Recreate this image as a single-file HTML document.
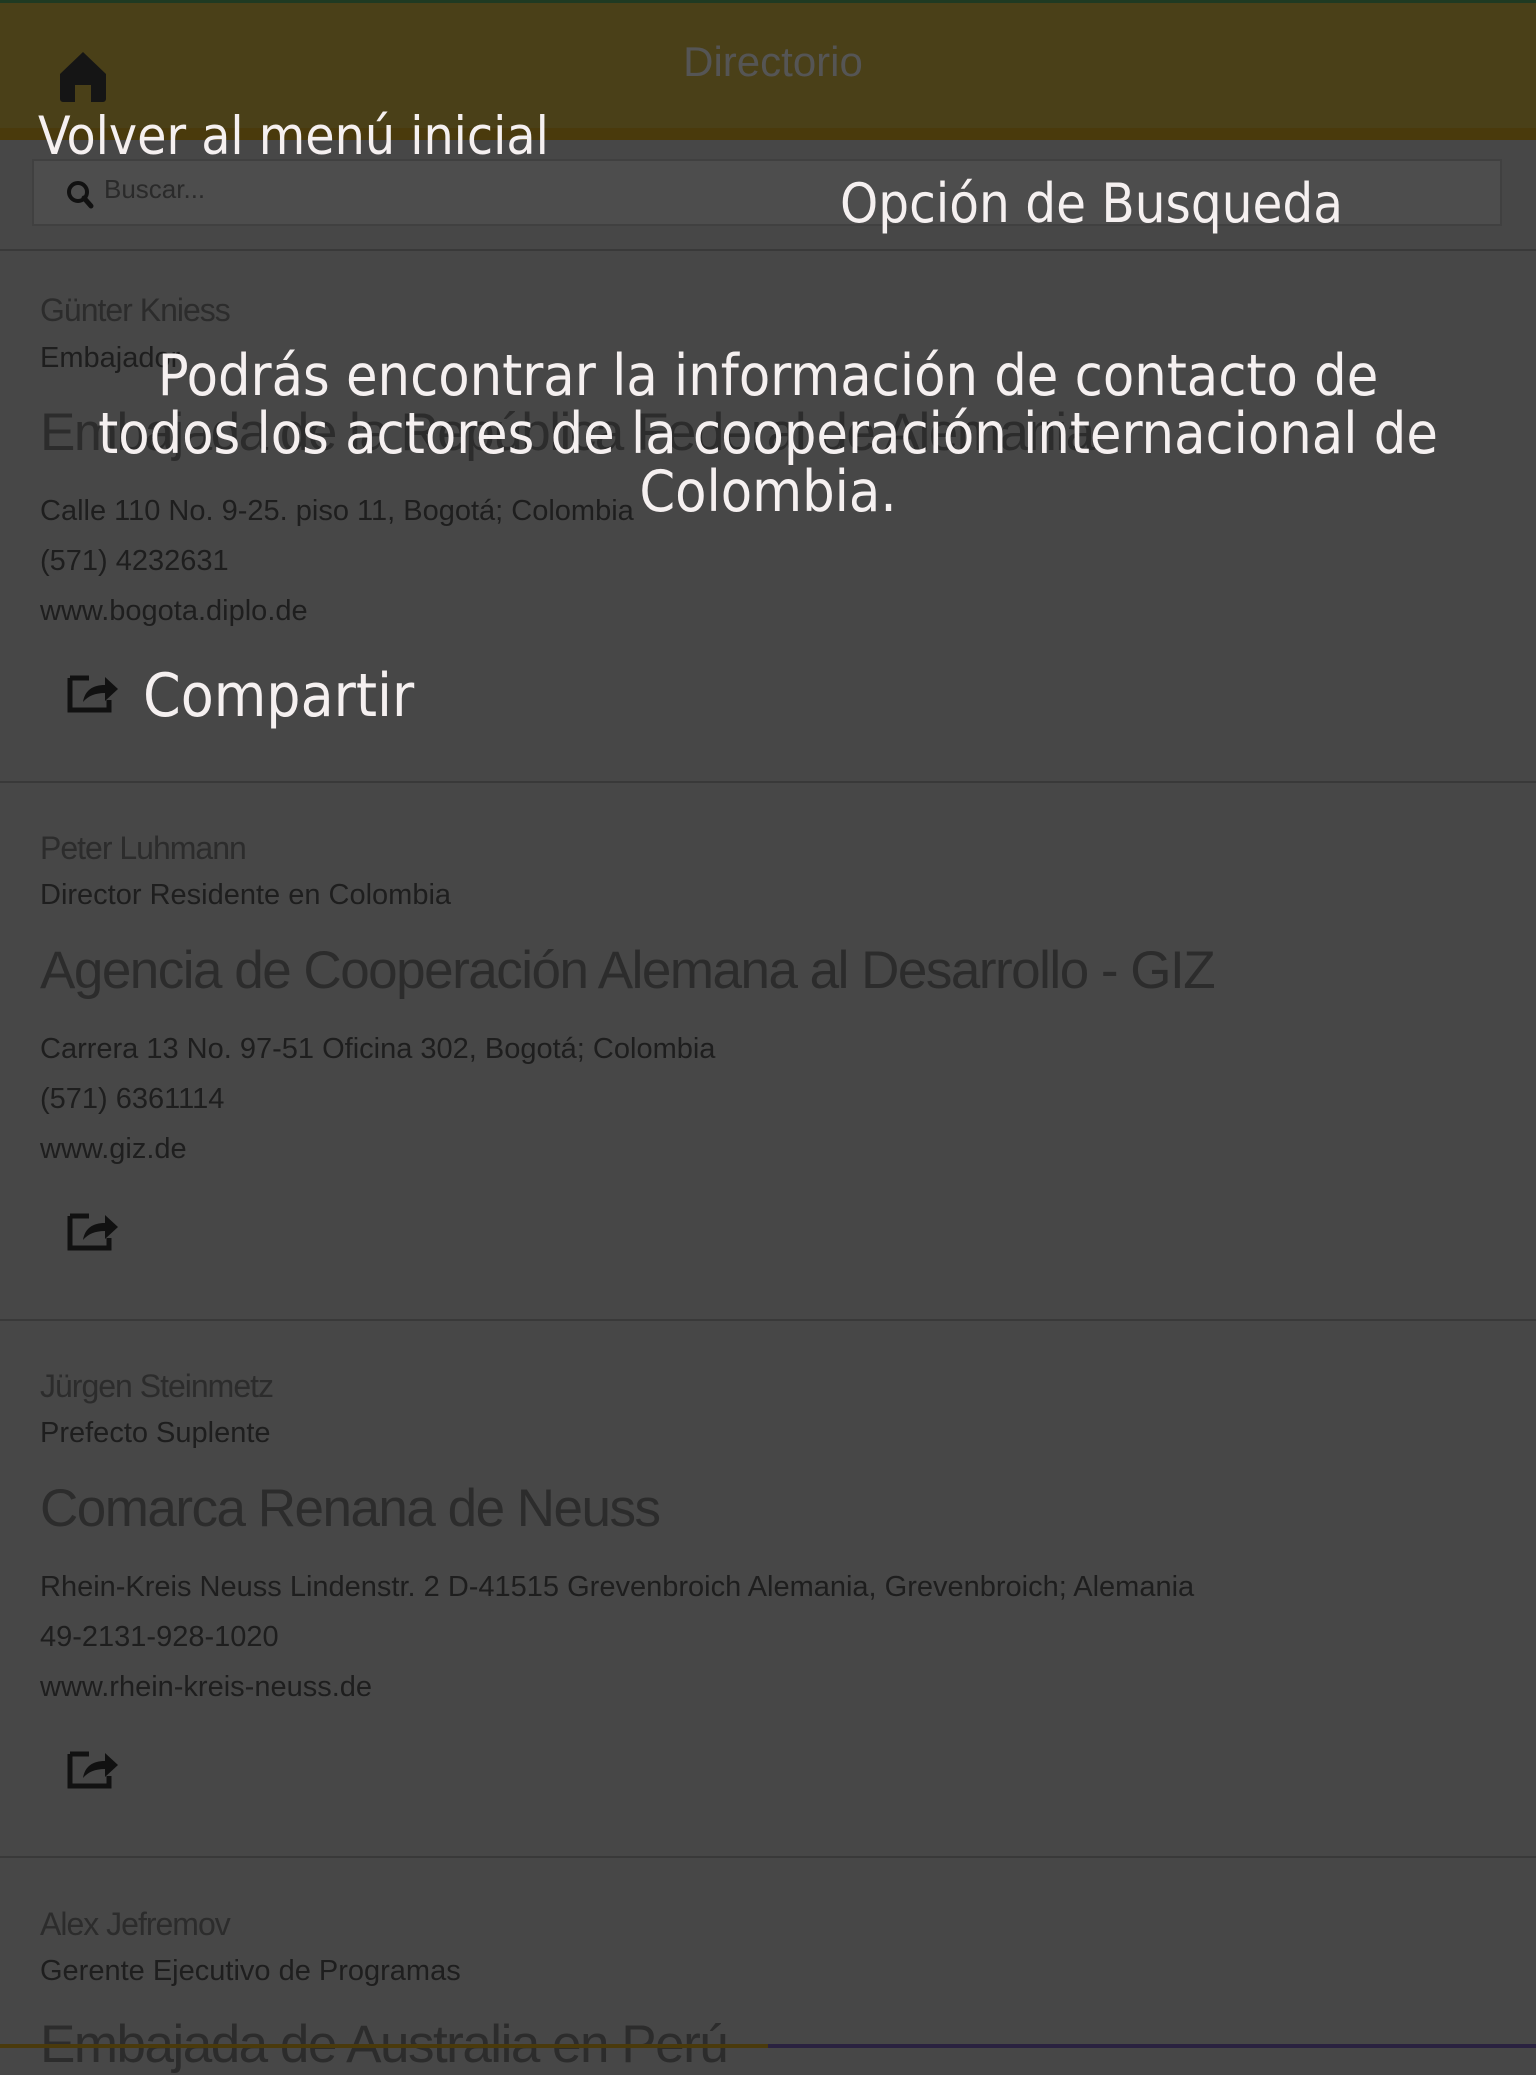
<!DOCTYPE html>
<html><head><meta charset="utf-8"><style>
body{margin:0;width:1536px;height:2048px;background:#474747;position:relative;overflow:hidden;font-family:"Liberation Sans",sans-serif}
.a{position:absolute;white-space:nowrap}
.hdr{position:absolute;left:0;top:0;width:1536px;height:140px;background:#4a4018;border-top:3px solid #1f3a22;box-sizing:border-box}
.hdr2{position:absolute;left:0;top:128px;width:1536px;height:12px;background:#4a3a0c}
.sb{position:absolute;left:32px;top:159px;width:1470px;height:67px;background:#4d4d4d;border:2px solid #404040;box-sizing:border-box}
.sep{position:absolute;left:0;width:1536px;height:2px;background:#393939}
.nm{font-size:32px;color:#2c2c2c;letter-spacing:-1px}
.rl,.tx{font-size:29px;color:#1e1e1e}
.org{font-size:53px;color:#2c2c2c;letter-spacing:-1.5px}
.hw{color:#f5f0f0;font-family:"DejaVu Sans Condensed","DejaVu Sans",sans-serif;font-stretch:condensed;font-weight:normal}
</style></head><body>
<div class="hdr"></div><div class="hdr2"></div>
<svg class="a" style="left:58px;top:50px" width="50" height="52" viewBox="0 0 50 52"><path d="M25 2 L48 24 V49 a3 3 0 0 1-3 3 H33 V35 H17 V52 H5 a3 3 0 0 1-3-3 V24 Z" fill="#151515"/></svg>
<div class="a" style="left:0;width:1546px;text-align:center;top:38px;font-size:42px;color:#555">Directorio</div>
<div class="sb"></div>
<svg class="a" style="left:66px;top:180px" width="32" height="30" viewBox="0 0 32 30"><circle cx="12" cy="12" r="9" fill="none" stroke="#111" stroke-width="4"/><path d="M18 18 L25 26" stroke="#111" stroke-width="5" stroke-linecap="round"/></svg>
<div class="a" style="left:104px;top:174px;font-size:26px;color:#2a2a2a">Buscar...</div>
<div class="sep" style="top:249px"></div>

<div class="a nm" style="left:40px;top:292px">Günter Kniess</div>
<div class="a rl" style="left:40px;top:342px">Embajador</div>
<div class="a org" style="left:40px;top:402px">Embajada de la República Federal de Alemania</div>
<div class="a tx" style="left:40px;top:495px">Calle 110 No. 9-25. piso 11, Bogotá; Colombia</div>
<div class="a tx" style="left:40px;top:545px">(571) 4232631</div>
<div class="a tx" style="left:40px;top:595px">www.bogota.diplo.de</div>
<svg class="a" style="left:67px;top:672px" width="52" height="41" viewBox="0 0 52 41"><path d="M3 6 H22 M3 6 V38 H42 V28" fill="none" stroke="#111" stroke-width="5"/><path d="M16 30 C18 18 26 13 38 13 V5 L51 17 L38 29 V21 C28 21 21 24 16 30 Z" fill="#111"/></svg>
<div class="sep" style="top:781px"></div>

<div class="a nm" style="left:40px;top:830px">Peter Luhmann</div>
<div class="a rl" style="left:40px;top:879px">Director Residente en Colombia</div>
<div class="a org" style="left:40px;top:940px">Agencia de Cooperación Alemana al Desarrollo - GIZ</div>
<div class="a tx" style="left:40px;top:1033px">Carrera 13 No. 97-51 Oficina 302, Bogotá; Colombia</div>
<div class="a tx" style="left:40px;top:1083px">(571) 6361114</div>
<div class="a tx" style="left:40px;top:1133px">www.giz.de</div>
<svg class="a" style="left:67px;top:1210px" width="52" height="41" viewBox="0 0 52 41"><path d="M3 6 H22 M3 6 V38 H42 V28" fill="none" stroke="#111" stroke-width="5"/><path d="M16 30 C18 18 26 13 38 13 V5 L51 17 L38 29 V21 C28 21 21 24 16 30 Z" fill="#111"/></svg>
<div class="sep" style="top:1319px"></div>

<div class="a nm" style="left:40px;top:1368px">Jürgen Steinmetz</div>
<div class="a rl" style="left:40px;top:1417px">Prefecto Suplente</div>
<div class="a org" style="left:40px;top:1478px">Comarca Renana de Neuss</div>
<div class="a tx" style="left:40px;top:1571px">Rhein-Kreis Neuss Lindenstr. 2 D-41515 Grevenbroich Alemania, Grevenbroich; Alemania</div>
<div class="a tx" style="left:40px;top:1621px">49-2131-928-1020</div>
<div class="a tx" style="left:40px;top:1671px">www.rhein-kreis-neuss.de</div>
<svg class="a" style="left:67px;top:1748px" width="52" height="41" viewBox="0 0 52 41"><path d="M3 6 H22 M3 6 V38 H42 V28" fill="none" stroke="#111" stroke-width="5"/><path d="M16 30 C18 18 26 13 38 13 V5 L51 17 L38 29 V21 C28 21 21 24 16 30 Z" fill="#111"/></svg>
<div class="sep" style="top:1856px"></div>

<div class="a nm" style="left:40px;top:1906px">Alex Jefremov</div>
<div class="a rl" style="left:40px;top:1955px">Gerente Ejecutivo de Programas</div>
<div class="a org" style="left:40px;top:2014px">Embajada de Australia en Perú</div>
<div class="a" style="left:0;top:2044px;width:768px;height:4px;background:#4a3a0c"></div>
<div class="a" style="left:768px;top:2044px;width:768px;height:4px;background:#2a2240"></div>

<div class="a hw" style="left:38px;top:106px;font-size:53px">Volver al menú inicial</div>
<div class="a hw" style="left:840px;top:172px;font-size:54px">Opción de Busqueda</div>
<div class="a hw" style="left:0;width:1536px;text-align:center;top:347px;font-size:57px;line-height:58px;white-space:normal">Podrás encontrar la información de contacto de<br>todos los actores de la cooperación internacional de<br>Colombia.</div>
<div class="a hw" style="left:143px;top:661px;font-size:60px">Compartir</div>
</body></html>
